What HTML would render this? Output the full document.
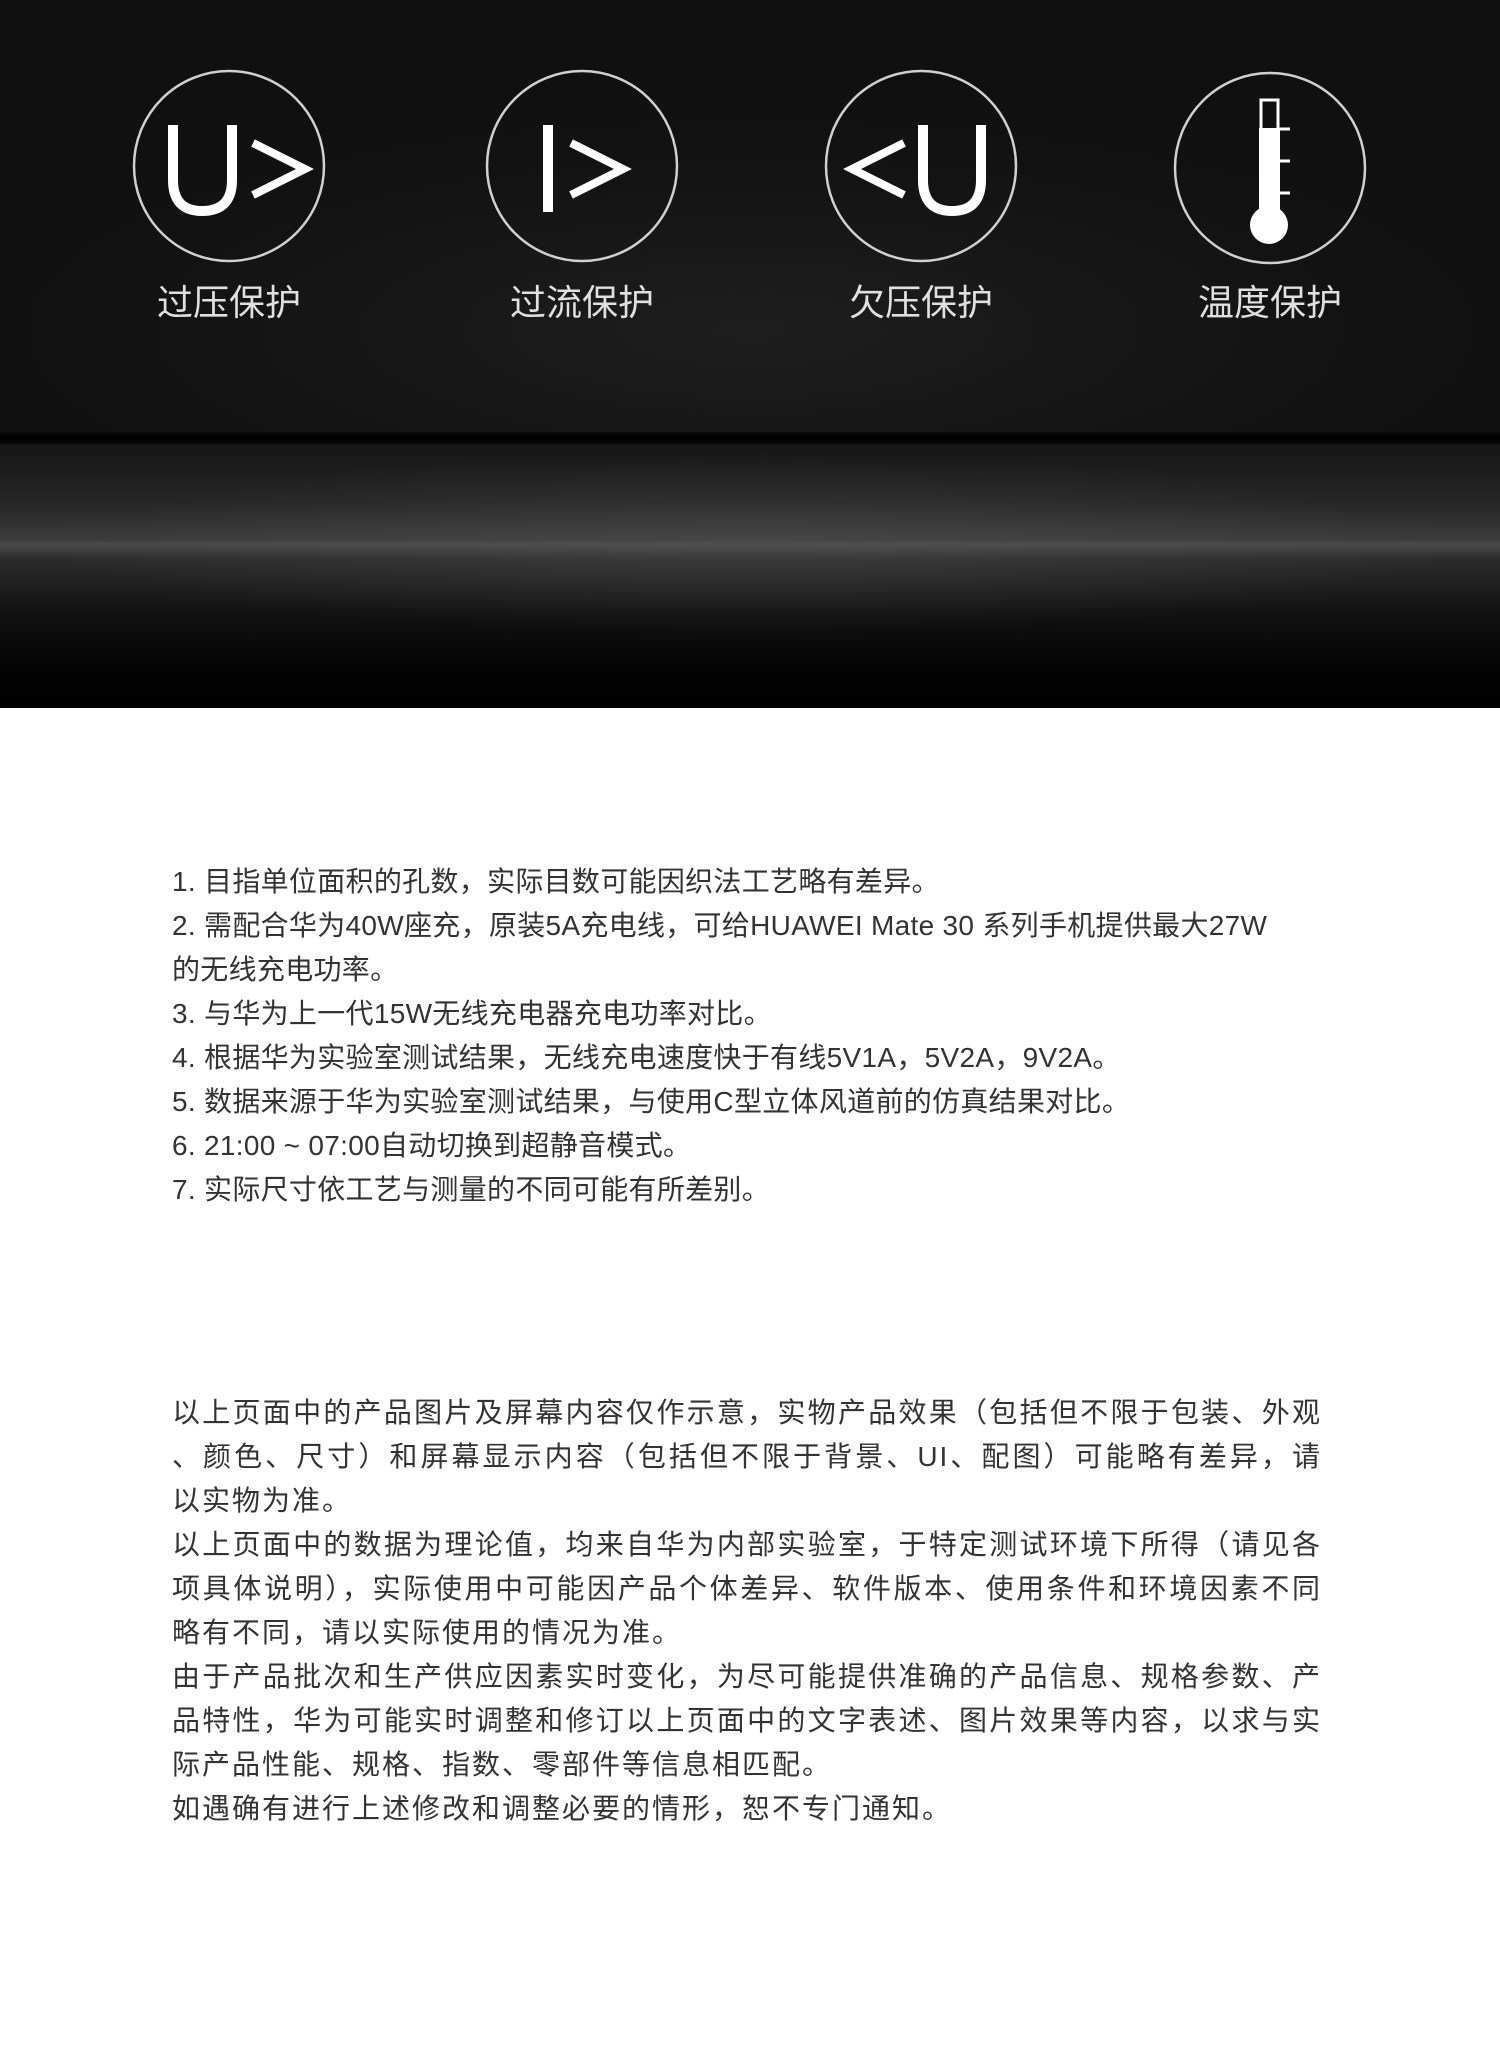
<!DOCTYPE html>
<html><head><meta charset="utf-8"><style>
html,body{margin:0;padding:0;background:#fff;width:1500px;height:2071px;overflow:hidden}
.top{position:absolute;left:0;top:0;width:1500px;height:440px;
background:radial-gradient(ellipse 900px 260px at 50% 330px,#1e1e1e,#121212 70%,#101010)}
.line{position:absolute;left:0;top:432px;width:1500px;height:12px;background:linear-gradient(#0a0a0a,#000 50%,#0a0a0a)}
.band{position:absolute;left:0;top:444px;width:1500px;height:264px;
background:linear-gradient(#161616 0px,#262626 60px,#3c3c3c 96px,#4a4a4a 100px,#2c2c2c 115px,#111 170px,#030303 230px,#000 264px)}
.glow{position:absolute;left:0;top:444px;width:1500px;height:264px;
background:radial-gradient(ellipse 700px 90px at 50% 100px,rgba(90,90,90,.35),rgba(0,0,0,0) 100%)}
.lbl{position:absolute;top:282px;width:240px;text-align:center;color:#e0e0e0;font:36px "Liberation Sans","Noto Sans CJK SC",sans-serif;line-height:42px}
.t{position:absolute;left:172px;color:#333;font:28px "Liberation Sans","Noto Sans CJK SC",sans-serif;letter-spacing:0.3px;white-space:nowrap;line-height:44px}
.p{position:absolute;left:172px;width:1150px;color:#333;font:28px "Liberation Sans","Noto Sans CJK SC",sans-serif;letter-spacing:2px;line-height:44px}
.p div{text-align:justify;text-align-last:justify;white-space:nowrap}
.p div.l{text-align-last:left}
</style></head><body>
<div class="top"></div><div class="line"></div><div class="band"></div><div class="glow"></div>
<svg style="position:absolute;left:0;top:0" width="1500" height="440" viewBox="0 0 1500 440">
<g fill="none" stroke="#d0d0d0" stroke-width="2.5">
<circle cx="229" cy="166" r="95"/><circle cx="582" cy="166" r="95"/><circle cx="921" cy="166" r="95"/><circle cx="1270" cy="168" r="95"/>
</g>
<g fill="none" stroke="#fff" stroke-width="10">
<path d="M173 125 V180 Q173 211 202 211 Q232 211 232 180 V125"/>
<path d="M253 143 L305 169 L253 195" stroke-width="8"/>
<path d="M548 125 V212"/>
<path d="M571 143 L623 169 L571 195" stroke-width="8"/>
<path d="M904 143 L852 169 L904 195" stroke-width="8"/>
<path d="M923 125 V180 Q923 211 952 211 Q981 211 981 180 V125"/>
</g>
<rect x="1261" y="100" width="17" height="30" fill="none" stroke="#fff" stroke-width="3"/>
<rect x="1259" y="128" width="21" height="90" fill="#fff"/>
<circle cx="1269" cy="225" r="19" fill="#fff"/>
<g stroke="#fff" stroke-width="3"><path d="M1279 129 H1290 M1279 161 H1290 M1279 193 H1290"/></g>
</svg>
<div class="lbl" style="left:109px">过压保护</div>
<div class="lbl" style="left:462px">过流保护</div>
<div class="lbl" style="left:801px">欠压保护</div>
<div class="lbl" style="left:1150px">温度保护</div>

<div class="t" style="top:860px">1. 目指单位面积的孔数，实际目数可能因织法工艺略有差异。<br>2. 需配合华为40W座充，原装5A充电线，可给HUAWEI Mate 30 系列手机提供最大27W<br>的无线充电功率。<br>3. 与华为上一代15W无线充电器充电功率对比。<br>4. 根据华为实验室测试结果，无线充电速度快于有线5V1A，5V2A，9V2A。<br>5. 数据来源于华为实验室测试结果，与使用C型立体风道前的仿真结果对比。<br>6. 21:00 ~ 07:00自动切换到超静音模式。<br>7. 实际尺寸依工艺与测量的不同可能有所差别。</div>

<div class="p" style="top:1391px">
<div>以上页面中的产品图片及屏幕内容仅作示意，实物产品效果（包括但不限于包装、外观</div>
<div>、颜色、尺寸）和屏幕显示内容（包括但不限于背景、UI、配图）可能略有差异，请</div>
<div class="l">以实物为准。</div>
<div>以上页面中的数据为理论值，均来自华为内部实验室，于特定测试环境下所得（请见各</div>
<div>项具体说明），实际使用中可能因产品个体差异、软件版本、使用条件和环境因素不同</div>
<div class="l">略有不同，请以实际使用的情况为准。</div>
<div>由于产品批次和生产供应因素实时变化，为尽可能提供准确的产品信息、规格参数、产</div>
<div>品特性，华为可能实时调整和修订以上页面中的文字表述、图片效果等内容，以求与实</div>
<div class="l">际产品性能、规格、指数、零部件等信息相匹配。</div>
<div class="l">如遇确有进行上述修改和调整必要的情形，恕不专门通知。</div>
</div>
</body></html>
